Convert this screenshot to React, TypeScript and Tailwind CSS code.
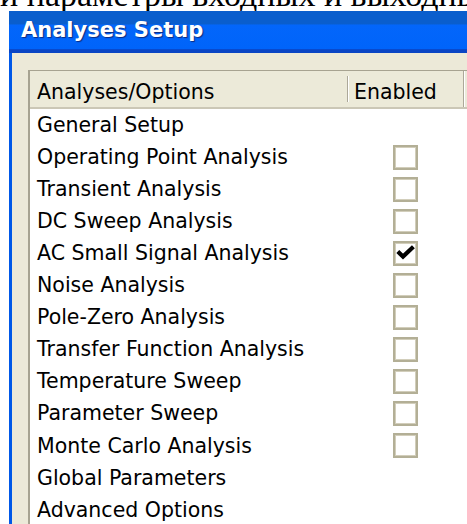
import React from 'react';

type Row = {
  label: string;
  hasBox?: boolean;
  checked?: boolean;
};

const rows: Row[] = [
  { label: 'General Setup' },
  { label: 'Operating Point Analysis', hasBox: true },
  { label: 'Transient Analysis', hasBox: true },
  { label: 'DC Sweep Analysis', hasBox: true },
  { label: 'AC Small Signal Analysis', hasBox: true, checked: true },
  { label: 'Noise Analysis', hasBox: true },
  { label: 'Pole-Zero Analysis', hasBox: true },
  { label: 'Transfer Function Analysis', hasBox: true },
  { label: 'Temperature Sweep', hasBox: true },
  { label: 'Parameter Sweep', hasBox: true },
  { label: 'Monte Carlo Analysis', hasBox: true },
  { label: 'Global Parameters' },
  { label: 'Advanced Options' },
];

const CheckBox: React.FC<{ checked?: boolean }> = ({ checked }) => (
  <div className="flex h-[25px] w-[25px] items-center justify-center border-2 border-[#b3af96] bg-white shadow-[inset_0_0_0_1px_#d2cebb]">
    {checked && (
      <svg width="19" height="15" viewBox="0 0 19 15" className="mt-[-1px]">
        <path d="M1.8 6.6 L7 11.6 L17.4 1.8" fill="none" stroke="#000" strokeWidth="4.2" strokeLinejoin="miter" />
      </svg>
    )}
  </div>
);

export default function App() {
  return (
    <div className="h-[524px] w-[467px] overflow-hidden bg-white font-['DejaVu_Sans',sans-serif]">
      {/* tail of the paragraph above the figure */}
      <div className="h-[11px] overflow-hidden">
        <p className="-mt-[23px] whitespace-nowrap font-['Liberation_Serif',serif] text-[34px] leading-[35px] text-black">
          и параметры входных и выходных
        </p>
      </div>

      <div className="ml-[9px] flex flex-col">
        <div className="flex h-[42px] items-center bg-[linear-gradient(to_bottom,#0a5ecd_0%,#0a5ecd_30%,#0366fb_34%,#0064fa_90%,#0a45c4_92%,#0a45c4_100%)] pl-[12px] pb-[3px] text-[21px] font-bold text-white [text-shadow:1px_1px_1px_#0c2b80]">
          Analyses Setup
        </div>

        <div className="flex h-[600px] border-l-[3px] border-[#0058e8] bg-[#ece9d8] pl-[16px] pt-[17px]">
          <div className="flex w-[460px] flex-col border-l-2 border-t border-[#a7a391] bg-white text-[20.5px] text-black">
            <div className="flex h-[38px] border-b-2 border-[#cbc7b6] bg-[#ecead9]">
              <div className="flex w-[317px] items-center pl-[7px] pt-[6px]">Analyses/Options</div>
              <div className="my-[5px] w-[2px] border-l border-r border-l-[#aca899] border-r-white" />
              <div className="flex w-[114px] items-center pl-[5px] pt-[6px]">Enabled</div>
              <div className="w-[2px] border-l border-r border-l-[#aca899] border-r-white" />
            </div>

            {rows.map((row) => (
              <div key={row.label} className="flex h-[32.08px] items-center">
                <div className="w-[317px] pl-[7px] leading-none">{row.label}</div>
                <div className="flex w-[116px] justify-center">
                  {row.hasBox && <CheckBox checked={row.checked} />}
                </div>
              </div>
            ))}
          </div>
        </div>
      </div>
    </div>
  );
}
